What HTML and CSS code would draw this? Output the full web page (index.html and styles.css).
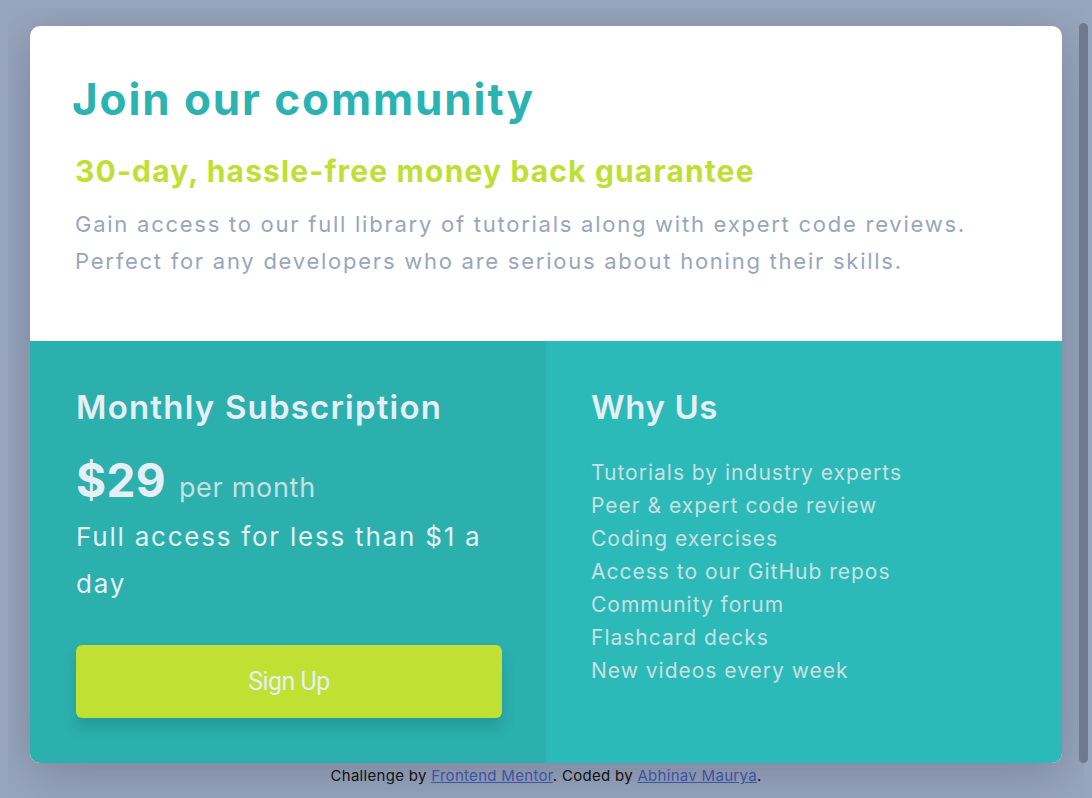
FILE: index.html
```html
<!DOCTYPE html>
<html lang="en">
<head>
<meta charset="utf-8">
<title>Single price grid component</title>
<link rel="stylesheet" href="styles.css">
</head>
<body>
<div class="page">
  <main class="card">
    <section class="intro">
      <h1 class="intro-title">Join our community</h1>
      <h2 class="intro-sub">30-day, hassle-free money back guarantee</h2>
      <p class="intro-text">Gain access to our full library of tutorials along with expert code reviews. Perfect for any developers who are serious about honing their skills.</p>
    </section>
    <div class="bottom">
      <section class="subscription">
        <h3 class="panel-title">Monthly Subscription</h3>
        <div class="price"><span class="price-amount">$29</span><span class="price-period">per month</span></div>
        <p class="price-note">Full access for less than $1 a day</p>
        <button class="signup" type="button">Sign Up</button>
      </section>
      <section class="why">
        <h3 class="panel-title why-title">Why Us</h3>
        <ul class="why-list">
          <li>Tutorials by industry experts</li>
          <li>Peer &amp; expert code review</li>
          <li>Coding exercises</li>
          <li>Access to our GitHub repos</li>
          <li>Community forum</li>
          <li>Flashcard decks</li>
          <li>New videos every week</li>
        </ul>
      </section>
    </div>
  </main>
  <div class="attribution">
    Challenge by <a href="#">Frontend Mentor</a>. Coded by <a href="#">Abhinav Maurya</a>.
  </div>
</div>
<div class="scroll-thumb" aria-hidden="true"></div>
</body>
</html>
```
FILE: styles.css
```css
* {
  box-sizing: border-box;
}

html {
  background: #98a6bd;
}

body {
  margin: 8px;
  font-family: Inter, "Noto Sans", sans-serif;
  background: #98a6bd;
}

.page {
  min-height: 100vh;
  display: flex;
  flex-direction: column;
  align-items: center;
  justify-content: center;
}

.card {
  width: 1032px;
  border-radius: 10px;
  overflow: hidden;
  background: #ffffff;
  box-shadow: 0 10px 50px rgba(60, 70, 95, 0.35);
}

.intro {
  padding: 47px 45px 62px;
}

.intro-title {
  margin: 0;
  font-size: 44px;
  line-height: 52px;
  font-weight: 700;
  color: #2bb3b1;
  letter-spacing: 1.9px;
  margin-left: -3px;
}

.intro-sub {
  margin: 28px 0 0;
  font-size: 30px;
  line-height: 36px;
  font-weight: 700;
  color: #c0df34;
  letter-spacing: 1.15px;
}

.intro-text {
  margin: 17px 0 0;
  font-size: 22px;
  line-height: 36.5px;
  font-weight: 400;
  color: #98a6bd;
  letter-spacing: 1.75px;
}

.bottom {
  display: grid;
  grid-template-columns: 1fr 1fr;
}

.subscription {
  background: #2bb0ae;
  padding: 46px 44px 45px 46px;
}

.why {
  background: #2bbab8;
  padding: 46px 45px 45px 45px;
}

.panel-title {
  margin: 0;
  font-size: 33px;
  line-height: 40px;
  font-weight: 600;
  color: #e6eff5;
  letter-spacing: 1.2px;
}

.why-title {
  letter-spacing: 0.6px;
}

.price {
  margin-top: 25px;
  display: flex;
  align-items: baseline;
  gap: 13px;
  height: 56px;
  line-height: 56px;
}

.price-amount {
  font-size: 46px;
  font-weight: 700;
  color: #e6eff5;
  letter-spacing: 0.3px;
}

.price-period {
  font-size: 27px;
  line-height: 1;
  color: #c6dfe1;
  letter-spacing: 0.7px;
}

.price-note {
  margin: 6px 0 0;
  font-size: 26px;
  line-height: 46.5px;
  color: #e6eff5;
  letter-spacing: 1.78px;
}

.signup {
  display: block;
  width: 100%;
  height: 73px;
  margin-top: 38px;
  border: 0;
  border-radius: 6px;
  background: #c0e034;
  color: #e6eff5;
  font-family: Roboto, sans-serif;
  font-size: 25px;
  letter-spacing: -0.5px;
  box-shadow: 0 10px 14px rgba(0, 60, 60, 0.18);
  cursor: pointer;
}

.why-list {
  list-style: none;
  margin: 29px 0 0;
  padding: 0;
  font-size: 21px;
  line-height: 33px;
  color: #c9e0e2;
  letter-spacing: 1px;
}

.attribution {
  font-size: 15px;
  line-height: 25px;
  text-align: center;
  color: #111;
  letter-spacing: 0.3px;
}

.attribution a {
  color: #3e52a3;
}

.scroll-thumb {
  position: fixed;
  top: 23px;
  right: 4px;
  width: 9px;
  height: 740px;
  border-radius: 5px;
  background: #6f7a8d;
}
```
